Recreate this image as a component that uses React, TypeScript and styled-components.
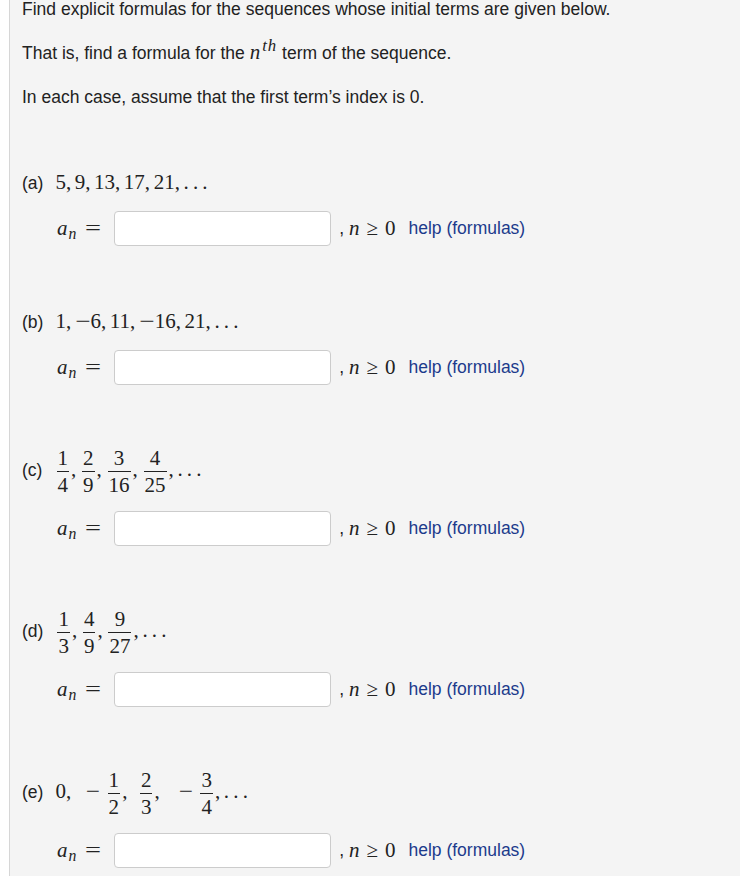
import styled, { createGlobalStyle } from "styled-components";

const Global = createGlobalStyle`
  html, body {
    margin: 0;
    padding: 0;
    background: #fff;
  }
  body {
    font-family: "Liberation Sans", Arial, sans-serif;
    color: #222;
  }
`;

const Page = styled.div`
  margin-left: 9px;
  border-left: 1px solid #d6d6d6;
  background: #f4f4f4;
  min-height: 876px;
  padding: 0 12px 40px;
  font-size: 17.5px;
  overflow: hidden;
  box-sizing: border-box;
`;

const Para = styled.p`
  margin: 0 0 24.5px;
  line-height: 19px;

  &:first-child {
    margin-top: -0.5px;
  }
`;

const Math = styled.span`
  font-family: "Liberation Serif", "Times New Roman", serif;
  font-size: 21px;
  white-space: nowrap;
`;

const Var = styled.i`
  font-style: italic;
`;

const Sup = styled.sup`
  font-size: 0.8em;
  font-style: italic;
  line-height: 0;
  vertical-align: 8px;
  margin-left: 2px;
  letter-spacing: 1px;
`;

const Sub = styled.sub`
  font-size: 0.75em;
  font-style: italic;
  line-height: 0;
  vertical-align: -4px;
  margin-left: 1px;
`;

const Problem = styled.section`
  margin-top: 63px;
`;

const SeqLine = styled.div`
  line-height: 24px;
`;

const Label = styled.span`
  margin-right: 12px;
`;

const Sep = styled.span<{ $wide?: boolean }>`
  margin-right: ${(p) => (p.$wide ? "0.5em" : "0.17em")};
`;

/* unary minus, drawn wider like the TeX glyph */
const Neg = styled.span`
  display: inline-block;
  margin: 0 2px;
  transform: scaleX(1.3);
`;

const Minus = styled.span<{ $lead?: number }>`
  display: inline-block;
  transform: scaleX(1.2);
  margin: 0 0.3em 0 ${(p) => p.$lead ?? 0}em;
`;

const Dots = styled.span`
  letter-spacing: 0.2em;
`;

const Frac = styled.span`
  display: inline-flex;
  flex-direction: column;
  vertical-align: middle;
  line-height: 20px;
  margin: 0 0.1em;
  text-align: center;
`;

const Num = styled.span`
  padding: 0 1px 3px;
`;

const Den = styled.span`
  padding: 3px 1px 0;
  border-top: 1px solid #222;
`;

const AnswerRow = styled.div`
  display: flex;
  align-items: center;
  margin: 16px 0 0 35px;
  line-height: 20px;
`;

const Eq = styled.span`
  display: inline-block;
  margin-left: 11px;
  transform: scaleX(1.35);
`;

const Field = styled.input`
  width: 217px;
  height: 35px;
  box-sizing: border-box;
  border: 1px solid #cccccc;
  border-radius: 4px;
  background: #fff;
  margin: 0 8px 0 15px;
  padding: 4px 6px;
  font-size: 16px;
`;

const Ge = styled.span`
  margin: 0 7px;
`;

const Help = styled.a`
  color: #1c3b8c;
  text-decoration: none;
  margin-left: 13px;
`;

const F = ({ n, d }: { n: string; d: string }) => (
  <Frac>
    <Num>{n}</Num>
    <Den>{d}</Den>
  </Frac>
);

const Answer = () => (
  <AnswerRow>
    <Math>
      <Var>a</Var>
      <Sub>n</Sub>
      <Eq>=</Eq>
    </Math>
    <Field type="text" />
    <span>,&nbsp;</span>
    <Math>
      <Var>n</Var>
      <Ge>≥</Ge>0
    </Math>
    <Help href="#">help (formulas)</Help>
  </AnswerRow>
);

const list = (items: string[]) =>
  items.map((x, i) => (
    <span key={i}>
      {x.startsWith("−") ? (
        <>
          <Neg>−</Neg>
          {x.slice(1)}
        </>
      ) : (
        x
      )}
      <Sep>,</Sep>
    </span>
  ));

export default function App() {
  return (
    <Page>
      <Global />
      <Para>Find explicit formulas for the sequences whose initial terms are given below.</Para>
      <Para>
        That is, find a formula for the{" "}
        <Math>
          <Var>n</Var>
          <Sup>th</Sup>
        </Math>{" "}
        term of the sequence.
      </Para>
      <Para>In each case, assume that the first term’s index is 0.</Para>

      <Problem>
        <SeqLine>
          <Label>(a)</Label>
          <Math>
            {list(["5", "9", "13", "17", "21"])}
            <Dots>...</Dots>
          </Math>
        </SeqLine>
        <Answer />
      </Problem>

      <Problem>
        <SeqLine>
          <Label>(b)</Label>
          <Math>
            {list(["1", "−6", "11", "−16", "21"])}
            <Dots>...</Dots>
          </Math>
        </SeqLine>
        <Answer />
      </Problem>

      <Problem>
        <SeqLine>
          <Label>(c)</Label>
          <Math>
            <F n="1" d="4" />
            <Sep>,</Sep>
            <F n="2" d="9" />
            <Sep>,</Sep>
            <F n="3" d="16" />
            <Sep>,</Sep>
            <F n="4" d="25" />
            <Sep>,</Sep>
            <Dots>...</Dots>
          </Math>
        </SeqLine>
        <Answer />
      </Problem>

      <Problem>
        <SeqLine>
          <Label>(d)</Label>
          <Math>
            <F n="1" d="3" />
            <Sep>,</Sep>
            <F n="4" d="9" />
            <Sep>,</Sep>
            <F n="9" d="27" />
            <Sep>,</Sep>
            <Dots>...</Dots>
          </Math>
        </SeqLine>
        <Answer />
      </Problem>

      <Problem>
        <SeqLine>
          <Label>(e)</Label>
          <Math>
            0<Sep>,</Sep>
            <Minus $lead={0.6}>−</Minus>
            <F n="1" d="2" />
            <Sep $wide>,</Sep>
            <F n="2" d="3" />
            <Sep>,</Sep>
            <Minus $lead={0.8}>−</Minus>
            <F n="3" d="4" />
            <Sep>,</Sep>
            <Dots>...</Dots>
          </Math>
        </SeqLine>
        <Answer />
      </Problem>
    </Page>
  );
}
